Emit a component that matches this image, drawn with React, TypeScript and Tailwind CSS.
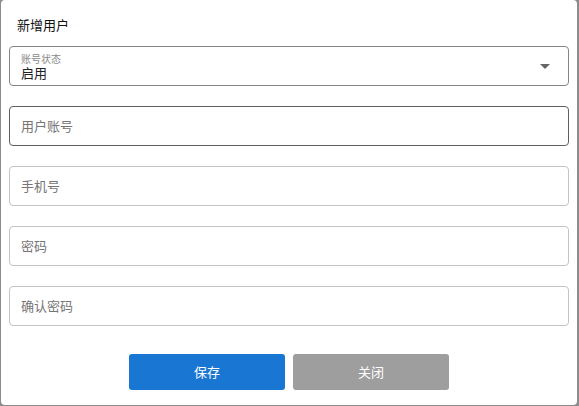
const fields = ["用户账号", "手机号", "密码", "确认密码"];

const App = () => {
  return (
    <div
      className="h-[406px] w-[579px] overflow-hidden bg-[#8c8c8c] pl-px"
      style={{ fontFamily: '"Noto Sans CJK SC", "Noto Sans", sans-serif' }}
    >
      <div className="h-[405px] w-[576px] rounded-[4px] bg-white">
        <h2 className="px-4 pt-[15px] text-[13px] leading-5 font-normal text-[#111]">
          新增用户
        </h2>

        <div className="mt-[11px] flex flex-col gap-5 px-2">
          {/* 账号状态 */}
          <div className="relative flex h-10 items-center rounded-[4px] border border-[#858585] px-[11px]">
            <div className="flex flex-col gap-[2px]">
              <span className="text-[10px] leading-[11px] text-[#8a8a8a]">账号状态</span>
              <span className="text-[13px] leading-[14px] text-[#212121]">启用</span>
            </div>
            <span className="absolute right-[18px] top-[17px] h-0 w-0 border-x-[5px] border-t-[5px] border-x-transparent border-t-[#666]" />
          </div>

          {fields.map((label, i) => (
            <div
              key={label}
              className={
                i === 0
                  ? "flex h-10 items-center rounded-[4px] border border-[#5f5f5f] px-[11px]"
                  : "flex h-10 items-center rounded-[4px] border border-[#c4c4c4] px-[11px]"
              }
            >
              <span className="text-[13px] text-[#757575]">{label}</span>
            </div>
          ))}
        </div>

        <div className="mt-7 flex justify-center gap-2">
          <button className="h-9 w-[156px] rounded-[3px] bg-[#1976d2] text-[13px] text-white">
            保存
          </button>
          <button className="h-9 w-[156px] rounded-[3px] bg-[#9e9e9e] text-[13px] text-white">
            关闭
          </button>
        </div>
      </div>
    </div>
  );
};

export default App;
